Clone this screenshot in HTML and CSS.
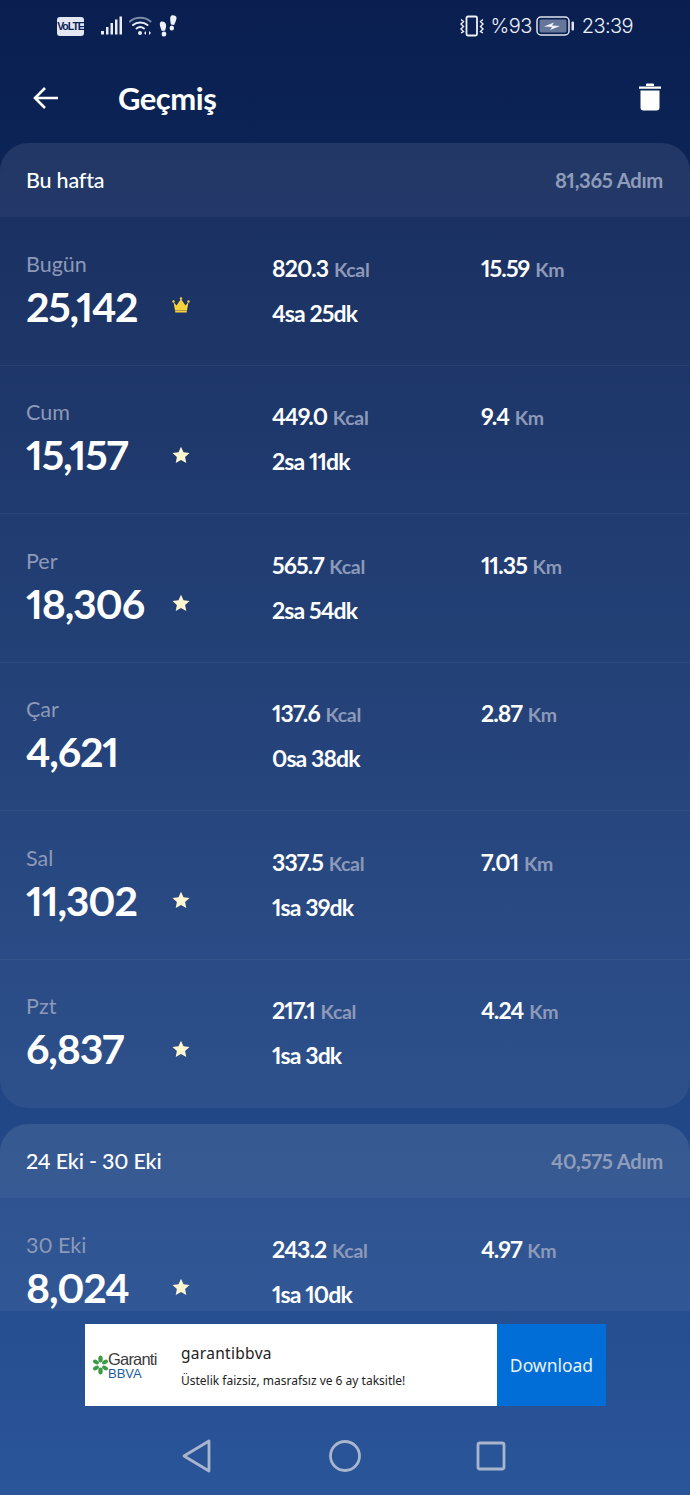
FILE: index.html
```html
<!DOCTYPE html>
<html lang="tr">
<head>
    <meta charset="UTF-8">
    <title>Geçmiş</title>
    <link rel="stylesheet" href="styles.css">
</head>
<body>
    <div class="statusbar">
        <div class="status-left">
            <span class="volte">VoLTE</span>
            <svg class="ic-signal" width="22" height="20" viewBox="0 0 22 20"><g fill="#e8ecf6"><rect x="0" y="15" width="3" height="3.5"/><rect x="5" y="11" width="2.5" height="7.5"/><rect x="9.5" y="7" width="2.5" height="11.5"/><rect x="14" y="3.5" width="2.5" height="15"/><rect x="18.5" y="0.5" width="2.5" height="18"/></g></svg>
            <svg class="ic-wifi" width="25" height="20" viewBox="0 0 25 20"><g fill="none" stroke-linecap="round" stroke-width="2"><path d="M1 5.500C6.500 0.500 16 0.500 21.500 5.500" stroke="#7d8aa8"/><path d="M4 9C8 5.500 14.500 5.500 18.500 9" stroke="#e8ecf6"/><path d="M7.500 12.500C10 10.500 12.500 10.500 15 12.500" stroke="#e8ecf6"/></g><circle cx="11" cy="17" r="2" fill="#e8ecf6"/><path d="M17 15l-2 2 2 2zM20 15l2 2-2 2z" fill="#e8ecf6"/></svg>
            <svg class="ic-steps" width="18" height="22" viewBox="0 0 18 22"><g fill="#eef1f8"><path d="M1.500 7C3.500 6 6.500 7 7 9.500C7.400 12 6.500 14 6.200 15.500L2.800 16C2.300 14 -.5 9.500 1.500 7Z"/><ellipse cx="5" cy="19" rx="2.300" ry="2.600"/><path d="M12.500 .5C15 -.2 18 1 17.500 3.500C17 6.500 15.700 8.500 15.200 10L12 9.500C11.500 7.500 10.300 1.800 12.500 .5Z"/><ellipse cx="12.800" cy="13" rx="2.200" ry="2.500"/></g></svg>
        </div>
        <div class="status-right">
            <svg width="26" height="22" viewBox="0 0 26 22"><g fill="none" stroke="#eef1f8"><rect x="7.500" y="1.500" width="10.500" height="19" rx="1.500" stroke-width="1.800"/><path d="M2 4.500l2.500 2-2.500 2.500 2.500 2.500-2.500 2.500 2.500 2.500-2.500 1.500M24 4.500l-2.500 2 2.500 2.500-2.500 2.500 2.500 2.500-2.500 2.500 2.500 1.500" stroke-width="1.400"/></g></svg>
            <span class="pct">%93</span>
            <svg width="39" height="22" viewBox="0 0 39 22"><rect x="1" y="2" width="32" height="18" rx="4" fill="none" stroke="#dfe4f0" stroke-width="1.500"/><rect x="3.500" y="4.500" width="27" height="13" rx="1.500" fill="#66759a"/><rect x="35.500" y="6.500" width="2.500" height="9" rx="1" fill="#dfe4f0"/><path d="M8 11.500l10-4-2 3 8 .5-10 4 2-3z" fill="#f2f4fa"/></svg>
            <span class="clock">23:39</span>
        </div>
    </div>

    <header class="topbar">
        <svg class="back" width="28" height="26" viewBox="0 0 28 26"><path d="M26 13H3M13 3L3 13l10 10" fill="none" stroke="#fff" stroke-width="2.600"/></svg>
        <h1>Geçmiş</h1>
        <svg class="trash" width="24" height="32" viewBox="0 0 24 32"><path d="M1 6.500h22v2.200H1zM8 6V4.500Q8 3.500 9 3.500h6Q16 3.500 16 4.500V6zM2.500 10.500h19V27.500Q21.500 30.500 18.500 30.500h-13Q2.500 30.500 2.500 27.500z" fill="#fff"/></svg>
    </header>

    <main class="history">
        <section class="week">
            <div class="week-head">
                <span>Bu hafta</span>
                <span class="week-total">81,365 Adım</span>
            </div>
            <div class="day">
                <div class="day-main"><div class="day-name">Bugün</div><div class="steps">25,142</div></div>
                <div class="badge"><svg width="18" height="16" viewBox="0 0 18 16"><path d="M1.500 5l3 3.500L9 2l4.500 6.500 3-3.500-1.500 8.500H3z" fill="#f8d23a"/><rect x="3.200" y="13.700" width="11.600" height="1.800" fill="#f8d23a"/><circle cx="1.500" cy="4.500" r="1.200" fill="#f8d23a"/><circle cx="9" cy="1.500" r="1.200" fill="#f8d23a"/><circle cx="16.500" cy="4.500" r="1.200" fill="#f8d23a"/></svg></div>
                <div class="stats"><div class="val">820.3 <small>Kcal</small></div><div class="val">4sa 25dk</div></div>
                <div class="dist"><div class="val">15.59 <small>Km</small></div></div>
            </div>
            <div class="day">
                <div class="day-main"><div class="day-name">Cum</div><div class="steps">15,157</div></div>
                <div class="badge"><svg class="star" viewBox="0 0 18 18"><path d="M9 .8l2.500 5.500 6 .7-4.400 4 1.200 6L9 14l-5.300 3 1.200-6L.5 7l6-.7z"/></svg></div>
                <div class="stats"><div class="val">449.0 <small>Kcal</small></div><div class="val">2sa 11dk</div></div>
                <div class="dist"><div class="val">9.4 <small>Km</small></div></div>
            </div>
            <div class="day">
                <div class="day-main"><div class="day-name">Per</div><div class="steps">18,306</div></div>
                <div class="badge"><svg class="star" viewBox="0 0 18 18"><path d="M9 .8l2.500 5.500 6 .7-4.400 4 1.200 6L9 14l-5.300 3 1.200-6L.5 7l6-.7z"/></svg></div>
                <div class="stats"><div class="val">565.7 <small>Kcal</small></div><div class="val">2sa 54dk</div></div>
                <div class="dist"><div class="val">11.35 <small>Km</small></div></div>
            </div>
            <div class="day">
                <div class="day-main"><div class="day-name">Çar</div><div class="steps">4,621</div></div>
                <div class="badge"></div>
                <div class="stats"><div class="val">137.6 <small>Kcal</small></div><div class="val">0sa 38dk</div></div>
                <div class="dist"><div class="val">2.87 <small>Km</small></div></div>
            </div>
            <div class="day">
                <div class="day-main"><div class="day-name">Sal</div><div class="steps">11,302</div></div>
                <div class="badge"><svg class="star" viewBox="0 0 18 18"><path d="M9 .8l2.500 5.500 6 .7-4.400 4 1.200 6L9 14l-5.300 3 1.200-6L.5 7l6-.7z"/></svg></div>
                <div class="stats"><div class="val">337.5 <small>Kcal</small></div><div class="val">1sa 39dk</div></div>
                <div class="dist"><div class="val">7.01 <small>Km</small></div></div>
            </div>
            <div class="day">
                <div class="day-main"><div class="day-name">Pzt</div><div class="steps">6,837</div></div>
                <div class="badge"><svg class="star" viewBox="0 0 18 18"><path d="M9 .8l2.500 5.500 6 .7-4.400 4 1.200 6L9 14l-5.300 3 1.200-6L.5 7l6-.7z"/></svg></div>
                <div class="stats"><div class="val">217.1 <small>Kcal</small></div><div class="val">1sa 3dk</div></div>
                <div class="dist"><div class="val">4.24 <small>Km</small></div></div>
            </div>
        </section>

        <section class="week">
            <div class="week-head">
                <span>24 Eki - 30 Eki</span>
                <span class="week-total">40,575 Adım</span>
            </div>
            <div class="day">
                <div class="day-main"><div class="day-name">30 Eki</div><div class="steps">8,024</div></div>
                <div class="badge"><svg class="star" viewBox="0 0 18 18"><path d="M9 .8l2.500 5.500 6 .7-4.400 4 1.200 6L9 14l-5.300 3 1.200-6L.5 7l6-.7z"/></svg></div>
                <div class="stats"><div class="val">243.2 <small>Kcal</small></div><div class="val">1sa 10dk</div></div>
                <div class="dist"><div class="val">4.97 <small>Km</small></div></div>
            </div>
        </section>
    </main>

    <footer class="bottom">
        <div class="ad">
            <div class="ad-logo">
                <svg width="15" height="20" viewBox="0 0 15 20"><g fill="#3d9a45"><ellipse cx="7.500" cy="4" rx="2.200" ry="3.500"/><ellipse cx="7.500" cy="16" rx="2.200" ry="3.500"/><ellipse cx="3" cy="7" rx="3.200" ry="2" transform="rotate(30 3 7)"/><ellipse cx="12" cy="7" rx="3.200" ry="2" transform="rotate(-30 12 7)"/><ellipse cx="3" cy="13" rx="3.200" ry="2" transform="rotate(-30 3 13)"/><ellipse cx="12" cy="13" rx="3.200" ry="2" transform="rotate(30 12 13)"/></g></svg>
                <div class="ad-brand">
                    <div class="garanti">Garanti</div>
                    <div class="bbva">BBVA</div>
                </div>
            </div>
            <div class="ad-text">
                <div class="ad-title">garantibbva</div>
                <div class="ad-desc">Üstelik faizsiz, masrafsız ve 6 ay taksitle!</div>
            </div>
            <div class="ad-btn">Download</div>
        </div>
        <nav class="navbar">
            <svg width="30" height="34" viewBox="0 0 30 34"><path d="M27 2L2 17l25 15z" fill="none" stroke="#a9b5cc" stroke-width="2.800" stroke-linejoin="round"/></svg>
            <svg class="nav-home" width="32" height="34" viewBox="0 0 32 34"><circle cx="16" cy="17" r="14.500" fill="none" stroke="#a9b5cc" stroke-width="2.800"/></svg>
            <svg width="30" height="30" viewBox="0 0 30 30"><rect x="2" y="2" width="26" height="26" rx="2" fill="none" stroke="#a9b5cc" stroke-width="2.800"/></svg>
        </nav>
    </footer>
</body>
</html>
```

FILE: styles.css
```css
* {
    box-sizing: border-box;
}

body {
    margin: 0;
    width: 690px;
    height: 1495px;
    display: flex;
    flex-direction: column;
    overflow: hidden;
    font-family: 'Lato', sans-serif;
    font-variant-numeric: proportional-nums;
    color: #ffffff;
    background: linear-gradient(180deg, #0a1f50 0%, #0c2356 10%, #2a5599 100%);
}

.statusbar {
    height: 52px;
    flex: none;
    display: flex;
    justify-content: space-between;
    align-items: center;
    padding: 0 57px 0 57px;
}

.status-left, .status-right {
    display: flex;
    align-items: center;
}

.volte {
    width: 27px;
    height: 19px;
    background-color: #e3e7f2;
    border-radius: 3px;
    color: #0c2356;
    font-family: 'Liberation Sans', sans-serif;
    font-size: 10.500px;
    font-weight: bold;
    line-height: 19px;
    text-align: center;
    letter-spacing: -1px;
}

.ic-signal {
    margin-left: 17px;
}

.ic-wifi {
    margin-left: 6px;
}

.ic-steps {
    margin-left: 5px;
}

.status-right {
    font-family: 'Inter', sans-serif;
    font-size: 20px;
    font-weight: 300;
    color: #eef1f8;
    gap: 4px;
}

.pct {
    margin-left: 1px;
    letter-spacing: -0.5px;
}

.clock {
    margin-left: 3px;
    letter-spacing: -0.6px;
}

.topbar {
    height: 91px;
    flex: none;
    display: flex;
    align-items: center;
    padding: 0 28px 0 32px;
}

.topbar h1 {
    margin: 0 0 0 58px;
    font-size: 31px;
    font-weight: 700;
    flex: 1;
    letter-spacing: -0.5px;
}

.trash {
    margin-top: -4px;
}

.history {
    flex: 1;
    min-height: 0;
    overflow: hidden;
}

.week {
    background-color: rgba(255, 255, 255, 0.055);
    border-radius: 28px;
    margin-bottom: 16px;
    overflow: hidden;
}

.week-head {
    height: 74px;
    display: flex;
    justify-content: space-between;
    align-items: center;
    padding: 0 27px 1px 26px;
    background-color: rgba(255, 255, 255, 0.045);
    font-size: 21.500px;
    font-weight: 500;
    letter-spacing: -0.2px;
}

.week-total {
    color: #8f9cba;
    font-size: 20.300px;
    font-weight: 700;
    letter-spacing: -0.3px;
}

.day {
    height: 148.500px;
    display: grid;
    grid-template-columns: 146px 100px 209px 1fr;
    padding: 32.500px 0 0 26px;
    border-bottom: 1px solid rgba(255, 255, 255, 0.05);
}

.day:last-child {
    border-bottom: none;
}

.day-name {
    font-size: 21.500px;
    line-height: 28px;
    color: #8c99b8;
}

.steps {
    font-size: 41px;
    font-weight: 700;
    line-height: 44px;
    margin-top: 7px;
    letter-spacing: -1.200px;
}

.badge {
    padding-top: 47.500px;
}

.star {
    display: block;
    width: 18px;
    height: 18px;
    fill: #fdf6d0;
}

.val {
    font-size: 23px;
    font-weight: 700;
    line-height: 45px;
    letter-spacing: -0.9px;
    height: 45px;
}

.val small {
    font-size: 19.500px;
    font-weight: 700;
    color: #8c99b8;
    letter-spacing: -0.3px;
    margin-left: 1px;
}

.stats, .dist {
    margin-top: -4px;
}

.bottom {
    height: 184px;
    flex: none;
    padding-top: 13px;
}

.ad {
    width: 521px;
    height: 82px;
    margin-left: 85px;
    display: flex;
    background-color: #ffffff;
    color: #222222;
}

.ad-logo {
    width: 96px;
    flex: none;
    display: flex;
    align-items: center;
    padding-left: 8px;
}

.ad-brand {
    margin-top: 1px;
}

.garanti {
    font-family: 'Liberation Sans', sans-serif;
    font-size: 16.500px;
    line-height: 16px;
    letter-spacing: -0.8px;
    color: #3c3c3c;
}

.bbva {
    font-family: 'Liberation Sans', sans-serif;
    font-size: 13px;
    line-height: 13px;
    color: #1b5b9e;
}

.ad-text {
    flex: 1;
    padding-top: 19px;
    font-family: 'Noto Sans', sans-serif;
}

.ad-title {
    font-size: 15.500px;
    line-height: 20px;
    letter-spacing: 0.3px;
}

.ad-desc {
    font-size: 12px;
    line-height: 17px;
    margin-top: 9px;
}

.ad-btn {
    width: 109px;
    flex: none;
    background-color: #006ed6;
    color: #e8f2fc;
    font-family: 'Noto Sans', sans-serif;
    font-size: 17.500px;
    line-height: 82px;
    text-align: center;
}

.navbar {
    display: flex;
    align-items: center;
    justify-content: space-between;
    width: 324px;
    margin: 33px 0 0 182px;
}

.nav-home {
    margin-left: 2px;
}
```
